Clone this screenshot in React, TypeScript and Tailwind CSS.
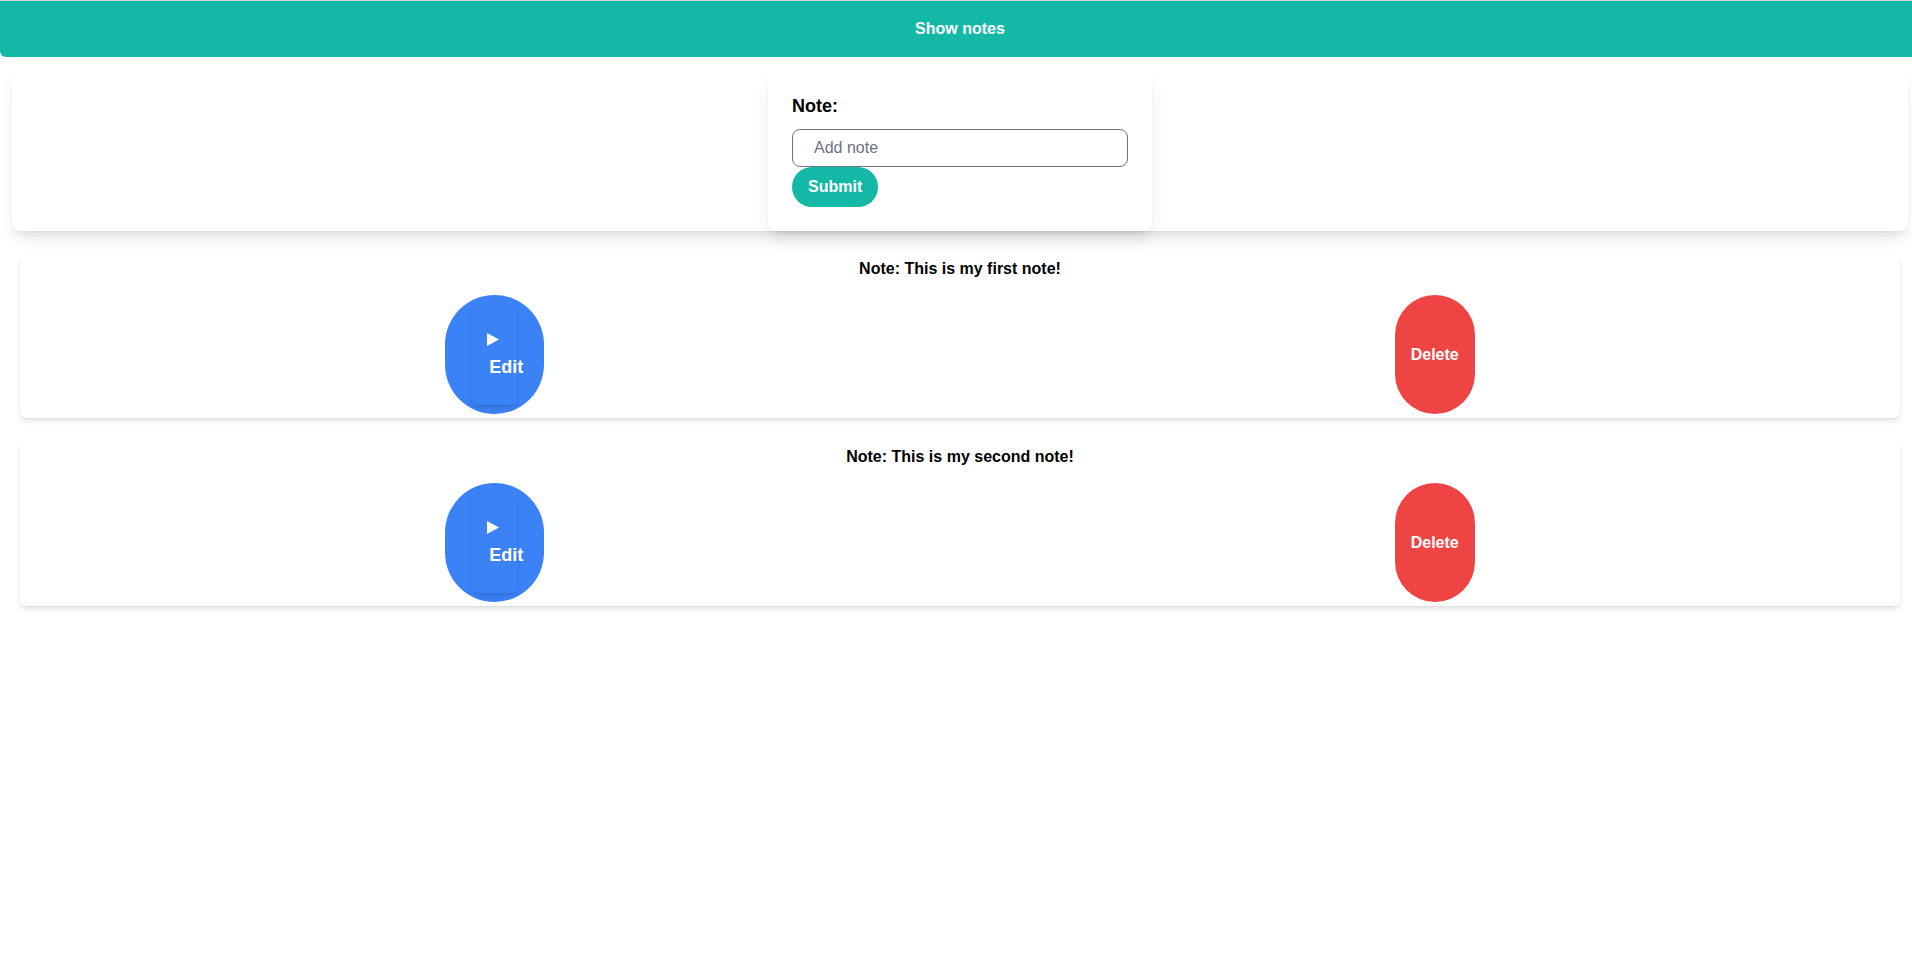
import React from "react";

function NoteCard({ text, first }: { text: string; first?: boolean }) {
  return (
    <div
      className={`mx-5 ${first ? "mt-[22px]" : "mt-[23px]"} bg-white rounded-md shadow-md py-1`}
    >
      <div className="text-center text-base leading-6 font-bold text-black">Note: {text}</div>
      <div className="flex justify-around mt-[14px]">
        <button className="rounded-full bg-[#3b82f6] px-[27px] py-[9px] text-white">
          <div className="w-[45px] h-[101px] rounded-md shadow-md pt-[29px] pl-[15px] text-left">
            <svg width="12" height="13" viewBox="0 0 12 13" className="block">
              <polygon points="0,0 12,6.5 0,13" fill="white" />
            </svg>
            <div className="mt-[7px] ml-[2px] whitespace-nowrap text-lg leading-7 font-bold">Edit</div>
          </div>
        </button>
        <button className="rounded-full bg-[#ef4444] px-4 text-white text-base font-bold">Delete</button>
      </div>
    </div>
  );
}

export default function App() {
  return (
    <div
      className="w-full min-h-screen overflow-hidden bg-white"
      style={{ fontFamily: '"Liberation Sans", Arial, sans-serif' }}
    >
      <div className="w-[1920px]">
        <div className="border-t border-[#d4d4d4]">
          <button className="w-full h-14 bg-[#14b8a6] text-white font-bold text-base rounded-b-md">
            Show notes
          </button>
        </div>
        <div className="mx-3 mt-[11px] bg-white rounded-lg shadow-lg flex justify-center">
          <div className="w-[384px] p-6 bg-white rounded-lg shadow-lg">
            <div className="text-lg leading-7 font-bold text-black mb-[9px]">Note:</div>
            <input
              className="block w-full h-[38px] border border-[#6b7280] rounded-lg pl-[21px] text-base text-black placeholder:text-[#6b7280] outline-none"
              placeholder="Add note"
            />
            <button className="rounded-full bg-[#14b8a6] text-white font-bold text-base px-4 py-2 leading-6">
              Submit
            </button>
          </div>
        </div>
        <NoteCard text="This is my first note!" first />
        <NoteCard text="This is my second note!" />
      </div>
    </div>
  );
}
